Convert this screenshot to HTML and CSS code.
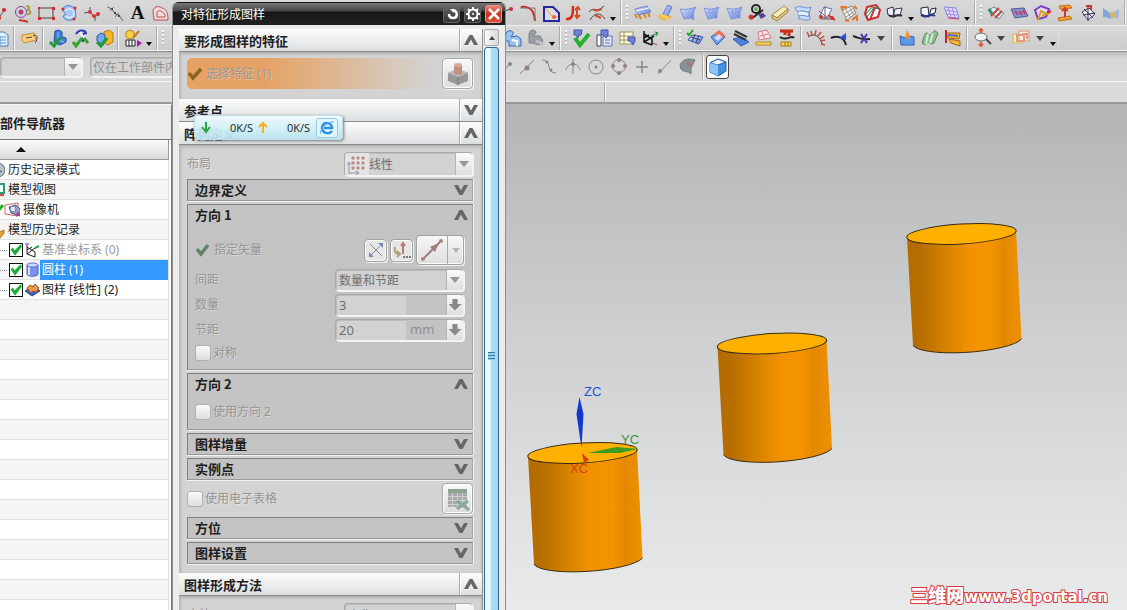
FILE: index.html
```html
<!DOCTYPE html>
<html lang="zh-CN">
<head>
<meta charset="utf-8">
<title>对特征形成图样</title>
<link rel="stylesheet" href="styles.css">
</head>
<body>
<svg class="defs" aria-hidden="true">
  <defs>
    <linearGradient id="blue" x1="0" y1="0" x2="1" y2="1"><stop offset="0" stop-color="#dfe8ff"/><stop offset="1" stop-color="#5878d8"/></linearGradient>
    <linearGradient id="side" x1="0" y1="0" x2="1" y2="0"><stop offset="0" stop-color="#b26a00"/><stop offset=".14" stop-color="#b96f00"/><stop offset=".36" stop-color="#d98400"/><stop offset=".55" stop-color="#f29200"/><stop offset=".74" stop-color="#f39300"/><stop offset=".84" stop-color="#e38800"/><stop offset="1" stop-color="#ee9000"/></linearGradient>
    <symbol id="sheet" viewBox="0 0 20 20"><path d="M3 5c5 2 10 1 15-1l-2 5v6c-4-1-6 1-9 1z" fill="url(#blue)" stroke="#7d93d8"/><path d="M4 9c4 1 8 0 12-1M8 6l1 9M12 5v10" stroke="#8ea2e6" fill="none"/></symbol>
    <symbol id="up" viewBox="0 0 14 10"><path d="M0 10 5.500 0h3L14 10h-4L7 4.500 4 10z" fill="#666"/></symbol>
    <symbol id="down" viewBox="0 0 14 10"><path d="M0 0 5.500 10h3L14 0h-4L7 5.500 4 0z" fill="#666"/></symbol>
    <symbol id="cyl" viewBox="0 0 116 132" overflow="visible"><path d="M0 14 6 122A55 12-4 0 0 114.500 116L109 7z" fill="url(#side)"/><ellipse cx="54.500" cy="11" rx="54.800" ry="9.900" transform="rotate(-3.500 54.500 11)" fill="#ffb000" stroke="#3a2c10"/><path d="M6 122A55 12-4 0 0 114.500 116" fill="none" stroke="#3a2c10"/></symbol>
  </defs>
</svg>
<div class="app">
  <header class="toolbars">
    <div class="bar">
      <div class="part left one">
        <button class="tb"><svg class="ic"><path d="M3 15h6l5-8" stroke="#555"/><circle cx="14" cy="7" r="2" fill="#d22"/><circle cx="9" cy="15" r="2" fill="#d22"/></svg></button>
        <button class="tb"><svg class="ic"><circle cx="8" cy="9" r="5.500" stroke="#8a3fa8"/><circle cx="8" cy="9" r="2" fill="#d44" stroke="#85309a"/><path d="M13 3c4 0 4 3 1 4 5 0 4 5 0 4" stroke="#a8a040" stroke-width="2"/><path d="M6 17l6 1 3 1" stroke="#c33" stroke-width="2"/></svg></button>
        <button class="tb"><svg class="ic"><path d="M3 5h14v10H3z" stroke="#444"/><path d="M2 14h3v3H2zM16 4h3v3h-3zM16 14h3v3h-3zM2 4h2v2H2z" fill="#d22"/></svg></button>
        <button class="tb"><svg class="ic"><path d="M3 7c4-7 9-4 13-2l1 9c-3 5-12 4-13-1l3-2z" fill="#a9c9f5" stroke="#4b7fd0"/><path d="M6 8c4-4 8-2 9 2s-5 6-8 3" stroke="#fff"/><circle cx="4" cy="6" r="1.500" fill="#d22"/><circle cx="16" cy="5" r="1.500" fill="#d22"/><circle cx="15" cy="16" r="1.500" fill="#d22"/></svg></button>
        <button class="tb"><svg class="ic"><path d="M2 10l6-1 4 5 6-3M8 4v5M13 14v4" stroke="#555"/><circle cx="8" cy="9" r="2" fill="#d33"/><circle cx="12" cy="13" r="2" fill="#d33"/><circle cx="16" cy="11" r="2" fill="#d33"/></svg></button>
        <button class="tb"><svg class="ic"><path d="M2 4l5 2 3 5 4 1 4 6M5 8l4-4M10 14l4-4" stroke="#666"/><path d="M6 5h2v2H6zM9 9h2v2H9zM13 12h2v2h-2z" fill="#444"/></svg></button>
        <button class="tb letter">A</button>
        <button class="tb"><svg class="ic"><path d="M2 9c0-5 5-7 9-4 4 1 6 4 6 12H3z" fill="#f4d9d9" stroke="#b0555c"/><path d="M6 10c0-3 3-3 5-1 3 1 3 3 3 5H6z" stroke="#b0555c"/></svg></button>
      </div>
      <div class="part right one">
        <button class="tb"><svg class="ic"><path d="M5 16c2-7 7-10 13-10" stroke="#333"/><circle cx="16" cy="6" r="2" fill="#c33"/></svg></button>
        <button class="tb"><svg class="ic"><path d="M3 4c8-1 13 2 14 14" stroke="#e02020" stroke-width="2"/><path d="M2 5h15v13" stroke="#777"/></svg></button>
        <button class="tb"><svg class="ic"><path d="M3 4h9l6 6v8H3z" stroke="#25259c" stroke-width="2" fill="#ddd"/><path d="M4 5l8 9h5" stroke="#e89b30"/><circle cx="13" cy="14" r="2" fill="#e07040"/></svg></button>
        <button class="tb"><svg class="ic"><path d="M2 16c7 1 7-6 7-13" stroke="#cc3018" stroke-width="2.500"/><path d="M13 14V5M11 7l3-3 2 3M11 12l2 3 3-3" stroke="#d84824" stroke-width="2"/></svg></button>
        <button class="tb"><svg class="ic"><path d="M2 9c4-6 7 2 15-6M3 17c5-8 10-8 15-1" stroke="#444"/><path d="M6 6c4 4 7 0 9 0M8 12l6 3" stroke="#d24a30" stroke-width="2"/></svg></button>
        <i class="caret"></i><i class="sep"></i><i class="grip"></i>
        <button class="tb"><svg class="ic"><path d="M3 6l12-3 4 6-13 3z" fill="url(#blue)" stroke="#6d88cf"/><path d="M3 11l2 4M7 12l2 4M12 11l2 4M16 10l2 4" stroke="#d9822b" stroke-width="2"/><path d="M4 8l13-3" stroke="#fff"/></svg></button>
        <button class="tb"><svg class="ic"><path d="M2 13l8-3 8 4-9 4z" fill="#f0b640"/><path d="M13 2l4 2-5 10-4-3z" fill="url(#blue)" stroke="#5b77c6"/><path d="M6 12l7 3" stroke="#f5d060" stroke-width="3"/></svg></button>
        <button class="tb"><svg class="ic"><path d="M2 6c6 1 11 0 16-2-3 5-3 8-2 13-3-3-7-1-10-1z" fill="url(#blue)" stroke="#7d93d8"/></svg></button>
        <button class="tb"><svg class="ic"><use href="#sheet"/></svg></button>
        <button class="tb"><svg class="ic"><use href="#sheet"/></svg></button>
        <button class="tb"><svg class="ic"><path d="M4 16L16 7" stroke="#222" stroke-width="2"/><circle cx="9" cy="6" r="4" stroke="#222" stroke-width="2" fill="#e8e8e0"/><circle cx="9" cy="6" r="2" fill="#6a6"/><circle cx="4" cy="14" r="2.500" fill="#c33"/><path d="M11 11l5-1 3 3-5 3z" fill="#54429a"/></svg></button>
        <button class="tb"><svg class="ic"><path d="M2 12L14 3l4 3-11 9z" fill="#f8edb0" stroke="#9c8a50"/><path d="M2 12v3l5 3 11-9V6L7 15z" fill="#e5d37c" stroke="#9c7a50"/></svg></button>
        <button class="tb"><svg class="ic"><path d="M2 5c5-4 10 2 16-1l-2 6 1 6c-4 3-8-1-11 0L5 9z" fill="#c8dcfb" stroke="#6b8fd6"/><path d="M5 9c4-3 8 1 11 0v4c-4 1-6-2-10 0" stroke="#5b7fc8" fill="#eaf2ff"/></svg></button>
        <button class="tb"><svg class="ic"><path d="M4 13l4-9 8 2-5 9z" fill="#fff" stroke="#5a6fc0"/><path d="M3 8l10 8M9 3v13M5 16h9" stroke="#667"/><circle cx="16" cy="15" r="2" fill="#c33"/><circle cx="5" cy="14" r="2" fill="#c33"/><path d="M12 12l7 5" stroke="#c33" stroke-width="2"/></svg></button>
        <button class="tb"><svg class="ic"><path d="M3 7l10-4 4 7-9 7z" fill="#f4f1ea" stroke="#888"/><path d="M6 5l6 10M10 4l5 8M5 11l10-6M7 14l9-6" stroke="#999"/><path d="M2 4h6M2 3l2 5M13 17l5-4v5M6 17l4 1M15 3l3 3" stroke="#e2742c" stroke-width="2"/></svg></button>
        <button class="tb"><svg class="ic"><path d="M5 4l9-2 4 5-2 7-10 3-3-6z" fill="#e8f4ff" stroke="#cc2b2b" stroke-width="2"/><path d="M4 11l5-6 7-1M5 14l6-8 6-1" stroke="#287f4a"/><path d="M8 17l5-13" stroke="#d03030" stroke-width="2"/></svg></button>
        <button class="tb"><svg class="ic"><path d="M2 6l6-2 1 8 6 1 2-8-7 1-2 7-5-1z" fill="#eef" stroke="#334"/><path d="M4 12c5 5 8-3 13 1" stroke="#334" stroke-width="2"/></svg></button>
        <i class="caret"></i>
        <button class="tb"><svg class="ic"><path d="M3 5l7-1 1 8 6-2 1-5-5 1-2 8-8-3z" fill="#f4f4ff" stroke="#223"/><path d="M3 12c6 5 8-3 14 1" stroke="#238" stroke-width="2"/></svg></button>
        <button class="tb"><svg class="ic"><path d="M3 4l12 1 3 10-11-1z" fill="#eadcff" stroke="#7c8ae0"/><path d="M4 7l12 2M5 11l12 1M7 4l3 10M11 4l3 11" stroke="#9b8ae8"/><path d="M7 15l11 1" stroke="#c36"/></svg></button>
        <i class="caret"></i><i class="sep"></i><i class="grip"></i>
        <button class="tb"><svg class="ic"><path d="M2 7l6-3 10 6-5 6z" fill="#d7e9f6" stroke="#6890a8"/><path d="M5 13l8-8M9 15l7-7" stroke="#cc4434" stroke-width="2"/><path d="M3 6l3 5" stroke="#3c8c6c" stroke-width="3"/></svg></button>
        <button class="tb"><svg class="ic"><path d="M2 6l13-1 4 8-13 2z" fill="#8494d0" stroke="#4a5a9c"/><path d="M6 8l3 4M10 8l3 4M14 7l2 4" stroke="#cc3460" stroke-width="2"/></svg></button>
        <button class="tb"><svg class="ic"><path d="M3 7l6-4 8 3-3 8-8 2z" fill="#e9d9ff" stroke="#7a3cc0" stroke-width="2"/><path d="M6 17l3-9 6 3-5 2" stroke="#d8a020" stroke-width="2"/><path d="M16 10l3-2" stroke="#d22" stroke-width="2"/></svg></button>
        <button class="tb"><svg class="ic"><path d="M4 3l11-1 2 3-12 1zM3 15l12-2 2 3-13 2z" fill="#f0a030" stroke="#c66c20"/><path d="M10 5v9M7 8l3-3 3 3" stroke="#d03828" stroke-width="2"/></svg></button>
        <button class="tb"><svg class="ic"><path d="M4 9l7-4 6 6-7 6z" fill="#eef" stroke="#446"/><path d="M10 2v16M6 6l9 9M5 12l12-2" stroke="#334"/><path d="M8 3h5v4" stroke="#c33" stroke-width="2"/></svg></button>
        <button class="tb"><svg class="ic"><path d="M2 5l7 5v6c-3-2-5-2-7-2z" fill="#7fa6e0"/><path d="M9 10c4 0 6-3 9-4v9c-4-1-6 1-9 1z" fill="#a7b6cc"/><path d="M9 10l5 4" stroke="#e8b050" stroke-width="3"/></svg></button>
        <i class="sep"></i>
      </div>
    </div>
    <div class="bar">
      <div class="part left two">
        <button class="tb"><svg class="ic"><path d="M4 4h10l4 3v11H4z" fill="#dff0ff" stroke="#4a7fc0"/><path d="M6 9h10M6 12h10M6 15h10M10 8v10" stroke="#5a94d0"/></svg></button>
        <i class="sep"></i>
        <button class="tb"><svg class="ic"><path d="M3 7l12-2 2 7-12 3-2-3z" fill="#f8cf80" stroke="#c78a30"/><path d="M7 10l6-1M14 8c5-3 5 4 2 7" stroke="#5b4020"/></svg></button>
        <i class="sep"></i>
        <button class="tb"><svg class="ic"><path d="M7 3l4-1 3 2v5l4 1v4l-6 3-6-3z" fill="#3f7fdc" stroke="#1d4c9c"/><path d="M10 4v8l6 2" stroke="#9cc4ff"/><path d="M2 14l4 4 6-8" stroke="#1b9a3a" stroke-width="3"/></svg></button>
        <button class="tb"><svg class="ic"><path d="M5 6c3-5 9-4 10-1l-3 1v8" stroke="#2b3fb0" stroke-width="2"/><path d="M9 4l5 7" stroke="#fff" stroke-width="2"/><path d="M2 14l3 4 6-8M13 10l4 5" stroke="#35a52c" stroke-width="3"/></svg></button>
        <button class="tb"><svg class="ic"><path d="M10 4l5-2 4 3v9l-5 3-4-2z" fill="#f7b52c" stroke="#b77810"/><path d="M3 8l4-3 4 2v6l-4 3-4-3z" fill="#6fa8ee" stroke="#2457a8"/><path d="M3 14l4 4 6-8" stroke="#1b9a3a" stroke-width="3"/></svg></button>
        <i class="sep"></i>
        <button class="tb"><svg class="ic"><path d="M3 4l4-2 4 2v5l-4 2-4-2z" fill="#f7cf40" stroke="#b58a10"/><path d="M3 12h9v6H3zM6 12v6M9 12v6" stroke="#222" fill="#fff"/><path d="M10 10l6-7" stroke="#c8781c" stroke-width="2"/><path d="M14 12l5 3-5 4z" fill="#a51ab0"/></svg></button>
        <i class="caret"></i><i class="sep"></i><i class="grip"></i>
        <button class="tb"><svg class="ic"><path d="M5 4h10v12H5z" fill="#dfe9ff" stroke="#3d6fd0"/></svg></button>
      </div>
      <div class="part right two">
        <button class="tb"><svg class="ic"><path d="M3 5c3-4 8-2 7 1l-2 3 6-1 4 3v7H6v-5H2z" fill="#9cc3f0" stroke="#3568b0"/><path d="M9 12l5 1v5" stroke="#fff" stroke-width="2"/></svg></button>
        <button class="tb"><svg class="ic"><path d="M3 6c1-6 8-4 7-1l-3 3 7 0 3 5-4 4-6-2-4 0z" fill="#9a9da4" stroke="#7d8088"/><path d="M10 13l7 3" stroke="#b9bcc2" stroke-width="3"/></svg></button>
        <i class="caret"></i><i class="sep"></i><i class="grip"></i>
        <button class="tb"><svg class="ic"><path d="M3 2h8l-1 5H8l-1 3-2-3H3z" fill="#7280dc" stroke="#4452a8"/><path d="M4 10l5 7 9-11" stroke="#22b02e" stroke-width="4"/></svg></button>
        <button class="tb"><svg class="ic"><path d="M3 7h4v11H3z" fill="#fff" stroke="#445"/><path d="M9 8h9v10H9z" fill="#dfe8fa" stroke="#5c74bc"/><path d="M7 2h7v5l-2 3-3-3H7z" fill="#7280dc" stroke="#4452a8"/><path d="M11 12h5M11 15h5" stroke="#5c74bc"/></svg></button>
        <button class="tb"><svg class="ic"><path d="M3 4h13v12H3z" fill="#fffbe0" stroke="#99965c"/><path d="M3 8h13M3 12h13M7 4v12" stroke="#99965c"/><path d="M11 9h7v4l-2 4-3-4h-2z" fill="#7280dc" stroke="#4452a8"/></svg></button>
        <button class="tb"><svg class="ic"><path d="M4 3v11l8 3M4 14l10-6M4 6l8 5v6M4 10l5-3" stroke="#111" stroke-width="1.500"/><path d="M11 8l7-3M15 4l3 1-2 3" stroke="#178a38"/><path d="M13 15l4 2" stroke="#b33"/></svg></button>
        <i class="caret"></i><i class="sep"></i><i class="grip"></i>
        <button class="tb"><svg class="ic"><path d="M3 12l4-5 11 2-4 7z" fill="url(#blue)" stroke="#3458b8"/><path d="M6 9l9 3M10 6l-3 8M14 7l-3 8" stroke="#345"/><path d="M2 5l2 2 4-5" stroke="#1ca52e" stroke-width="2"/></svg></button>
        <button class="tb"><svg class="ic"><path d="M3 9l8-6 6 6-8 8z" fill="#6f9bea" stroke="#3863c0"/><path d="M6 6l5-4 6 5-4 4z" fill="#f0745c"/><path d="M6 10l5-4 3 3-4 4z" fill="#cfe0ff"/></svg></button>
        <button class="tb"><svg class="ic"><path d="M2 11l8-2 8 5-8 4z" fill="#4f80de" stroke="#315fb8"/><path d="M4 3l12 6M3 6l12 6" stroke="#333" stroke-width="2"/></svg></button>
        <button class="tb"><svg class="ic"><path d="M4 4l9-2 4 8-12 2z" fill="#fbe3e7" stroke="#d07886"/><path d="M6 8l8-2M8 4l3 7" stroke="#d07886"/><path d="M2 14h15v3H2z" fill="#f7d264" stroke="#b48a20"/></svg></button>
        <button class="tb"><svg class="ic"><path d="M3 3h13M8 3v4M12 3v5" stroke="#c4301c" stroke-width="3"/><path d="M3 9c6 5 12-3 14 1" stroke="#222" stroke-width="2"/><path d="M4 14h10v4H4zM8 14v4M11 14v4" fill="#f7d264" stroke="#aa7c10"/></svg></button>
        <i class="sep"></i>
        <button class="tb"><svg class="ic"><path d="M2 9c7-5 12 0 14 7" stroke="#444"/><path d="M3 8L1 4M6 7L5 3M9 7l1-5M12 8l3-4M14 11l4-3M15 13l4-1M15 16l4 1" stroke="#cf4a3e" stroke-width="1.500"/></svg></button>
        <button class="tb"><svg class="ic"><path d="M2 10c6-3 13-1 15 7" stroke="#222" stroke-width="2"/><path d="M10 10l7-5v7z" fill="#2a4be0"/></svg></button>
        <button class="tb"><svg class="ic"><path d="M1 8c7 2 8 4 17 3" stroke="#222" stroke-width="2"/><path d="M9 6l6 9M15 6l-6 9" stroke="#3d39b0" stroke-width="2"/></svg></button>
        <i class="caret wide"></i><i class="sep"></i>
        <button class="tb"><svg class="ic"><path d="M3 8l5 2 3-2 6 1v8H4z" fill="#5e98e8" stroke="#2e62b4"/><path d="M8 10l2-8 3 6v3" fill="#f0902c"/></svg></button>
        <button class="tb"><svg class="ic"><path d="M2 15c3-12 5-11 6-9s3 1 5-2 3 0 5 1l-4 10c-4 3-5-3-7 0s-3 1-5 0z" fill="#90b990" stroke="#568a58"/><path d="M8 6l-2 10M13 5l-3 10" stroke="#d4ecd4" stroke-width="2"/></svg></button>
        <button class="tb"><svg class="ic"><path d="M3 5h14l-1 6-11-1zM6 11l11 2v5L8 15z" fill="#f5b740" stroke="#9c6418"/><path d="M5 7l10 1" stroke="#4a70cc" stroke-width="2"/><path d="M3 2v13" stroke="#c22" stroke-width="2"/></svg></button>
        <i class="sep"></i>
        <button class="tb"><svg class="ic"><ellipse cx="9" cy="9" rx="6" ry="4" fill="#eef0f4" stroke="#666"/><path d="M14 11l5 5" stroke="#444" stroke-width="2"/><path d="M9 1v4M7 3l2-2 2 2M9 18v-4M7 16l2 2 2-2" stroke="#e0602c" stroke-width="2"/></svg></button>
        <i class="caret wide"></i>
        <button class="tb"><svg class="ic"><path d="M2 6h9v9H2z" fill="#fbf0a8" stroke="#c8b75c"/><path d="M8 3h10v10H8z" fill="#fceadf" stroke="#d89c80"/><path d="M6 7h7v6H6zM11 6h5v5" stroke="#e39a82" stroke-width="2"/></svg></button>
        <i class="caret wide"></i><i class="caret"></i><i class="edge"></i>
      </div>
    </div>
    <div class="bar selection">
      <div class="part left">
        <div class="combo scope"><select disabled aria-label="类型过滤器"><option></option></select><i class="arrow"></i></div>
        <div class="combo within"><select disabled aria-label="选择范围"><option>仅在工作部件内部</option></select></div>
      </div>
      <div class="part right snap">
        <button class="tb"><svg class="ic gray"><path d="M3 17L16 7"/><circle cx="15" cy="7" r="2"/></svg></button>
        <button class="tb"><svg class="ic gray"><path d="M2 17L16 3"/><circle cx="9" cy="11" r="2.500"/></svg></button>
        <button class="tb"><svg class="ic gray"><path d="M1 3c11 0 3 13 14 13"/><circle cx="6" cy="5" r="1.500"/><circle cx="10" cy="13" r="1.500"/></svg></button>
        <button class="tb"><svg class="ic gray"><path d="M9 2v15M2 13c2-8 12-8 14 0"/><circle cx="9" cy="7" r="2"/></svg></button>
        <button class="tb"><svg class="ic gray"><circle class="o" cx="9" cy="10" r="7"/><circle cx="9" cy="10" r="1.500"/></svg></button>
        <button class="tb"><svg class="ic gray"><circle class="o" cx="9" cy="9" r="6.500"/><circle cx="9" cy="3" r="2"/><circle cx="3" cy="9" r="2"/><circle cx="15" cy="9" r="2"/><circle cx="9" cy="16" r="2"/></svg></button>
        <button class="tb"><svg class="ic gray"><path d="M9 4v12M3 10h12" stroke-width="1.500"/></svg></button>
        <button class="tb"><svg class="ic gray"><path d="M2 17L15 3"/><circle cx="4" cy="14" r="2"/></svg></button>
        <button class="tb"><svg class="ic"><path d="M1 8c3-6 8-7 15-5l-4 8v6c-4-4-7-1-10-5z" fill="#8c9198" stroke="#75797f"/><circle cx="10" cy="7" r="2" fill="#a87870"/></svg></button>
        <i class="sep"></i>
        <button class="tb on"><svg class="ic"><path d="M2 6l8-4 8 3v9l-8 5-8-4z" fill="#4390e0" stroke="#1c5caa"/><path d="M2 6l8 2 8-3-8-3z" fill="#e7f4ff" stroke="#1c5caa"/><path d="M2 6v9l8 4V8z" fill="#8cc4f8"/></svg></button>
      </div>
    </div>
    <div class="bar prompt"><div class="cue"></div><div class="status"></div></div>
  </header>

  <main class="main">
    <aside class="nav">
      <h2 class="navtitle">部件导航器</h2>
      <div class="navhead"><i class="sort"></i></div>
      <ul class="tree">
        <li><svg class="ti l"><circle cx="9" cy="9" r="7" fill="#b8c0cc" stroke="#5c6674"/><path d="M9 5v4l4 2" stroke="#445"/></svg>历史记录模式</li>
        <li><svg class="ti l"><path d="M7 3h8v9H7z" fill="#eff" stroke="#2b9a7c" stroke-width="2"/><path d="M8 14h7" stroke="#d44" stroke-width="2"/></svg>模型视图</li>
        <li class="cam"><svg class="ti tick"><path d="M5 9l3 3 7-8" stroke="#22b02e" stroke-width="3"/></svg><svg class="ti"><path d="M1 4l13-2v13l-13-2z" fill="#fff" stroke="#c66"/><path d="M5 6l7-2 4 4v7l-9-3z" fill="#9aa6d0" stroke="#556"/><circle cx="9" cy="8" r="3" fill="#dde8ff" stroke="#6572a8"/><path d="M13 10l3 3-4 3z" fill="#c02cb8"/></svg>摄像机</li>
        <li><svg class="ti l"><path d="M2 9l7 3 6-3v3l-4 5-7-3z" fill="#e8a53a" stroke="#a66a10"/></svg>模型历史记录</li>
        <li class="kid off"><i class="dots"></i><label><input type="checkbox" checked><svg class="ti"><path d="M3 4v9l8 3M3 13l8-6M3 6l8 5v5M3 9l5-3" stroke="#222"/><path d="M11 7l4-2" stroke="#2a4" stroke-width="2"/><path d="M1 3h4" stroke="#33c"/></svg><span>基准坐标系 (0)</span></label></li>
        <li class="kid sel"><i class="dots"></i><label><input type="checkbox" checked><svg class="ti"><path d="M3 4v9c0 3 11 3 11 0V4z" fill="#7b93ee" stroke="#4a5ec4"/><path d="M5 5v9" stroke="#d8e0ff" stroke-width="2"/><ellipse cx="8.500" cy="4" rx="5.500" ry="2" fill="#ccd6ff" stroke="#5a6ed0"/></svg><span>圆柱 (1)</span></label></li>
        <li class="kid"><i class="dots"></i><label><input type="checkbox" checked><svg class="ti"><path d="M1 10l8-5 7 5-8 5z" fill="#3d62c0" stroke="#2a468c"/><path d="M3 7l3-3 3 2 2-3 4 4-3 4-3-1-2 2z" fill="#f0964a" stroke="#a8581c"/></svg><span>图样 [线性] (2)</span></label></li>
      </ul>
    </aside>
    <section class="view">
      <svg class="scene">
        <g transform="translate(-172 -104)">
          <use href="#cyl" x="528" y="442" width="116" height="132"/>
          <use href="#cyl" x="717.500" y="332.500" width="116" height="132"/>
          <use href="#cyl" x="907" y="223" width="116" height="132"/>
          <path d="M579.500 397l-3 17 5 34 2-34z" fill="#1238d0"/>
          <path d="M587 453l30-6 21 2-18 4z" fill="#3f9c1c"/>
          <path d="M582 453l7 7-5 3z" fill="#d43a14"/>
          <text x="584" y="396" fill="#2350d8">ZC</text>
          <text x="621" y="444" fill="#35983c">YC</text>
          <text x="570" y="473" fill="#d8431c">XC</text>
        </g>
      </svg>
      <div class="mark"><b>三维网</b>www.3dportal.cn</div>
    </section>
  </main>

  <section class="dialog">
    <header class="titlebar"><h1>对特征形成图样</h1>
      <button aria-label="重置"><svg class="ti"><path d="M9 4c5 1 5 8 0 8-3 0-4-2-4-4" stroke="#fff" stroke-width="2.500"/><path d="M6 3h4v4z" fill="#fff"/></svg></button>
      <button aria-label="选项"><svg class="ti"><circle cx="8" cy="8" r="4.500" stroke="#fff" stroke-width="2"/><path d="M8 1v3M8 12v3M1 8h3M12 8h3M3 3l2 2M11 11l2 2M13 3l-2 2M5 11l-2 2" stroke="#fff" stroke-width="2"/><circle cx="8" cy="8" r="1" fill="#fff"/></svg></button>
      <button class="close" aria-label="关闭"><svg class="ti"><path d="M3 3l10 10M13 3L3 13" stroke="#fff" stroke-width="2.500"/></svg></button>
    </header>
    <div class="dlgbody">
      <div class="content">
        <h3 class="group">要形成图样的特征<button aria-label="折叠"><svg class="chev"><use href="#up"/></svg></button></h3>
        <div class="panel pick">
          <div class="choose"><svg class="ti"><path d="M2 8l4 5 8-9" stroke="#8a6420" stroke-width="3.500"/></svg>选择特征 (1)</div>
          <button class="big" disabled aria-label="特征"><svg class="ic24"><path d="M2 11l10-4 10 4v8l-10 4-10-4z" fill="#989898"/><path d="M2 11l10 4 10-4-10-4z" fill="#b8b8b8"/><path d="M12 15v8" stroke="#777"/><path d="M8 3v8c0 2 8 2 8 0V3z" fill="#c5917f"/><ellipse cx="12" cy="3" rx="4" ry="2" fill="#d4ab9c"/></svg></button>
        </div>
        <h3 class="group">参考点<button aria-label="展开"><svg class="chev"><use href="#down"/></svg></button></h3>
        <h3 class="group">阵列定义<button aria-label="折叠"><svg class="chev"><use href="#up"/></svg></button></h3>
        <div class="panel define">
          <div class="line layout"><label for="layout">布局</label>
            <div class="combo"><svg class="ic24 pat"><path d="M4 21V10M2 12l2-3 2 3M4 20h9M11 18l3 2-3 2" stroke="#8993a8"/><g fill="#bd8c8c"><circle cx="8" cy="5" r="1.700"/><circle cx="13" cy="5" r="1.700"/><circle cx="18" cy="5" r="1.700"/><circle cx="8" cy="10" r="1.700"/><circle cx="13" cy="10" r="1.700"/><circle cx="18" cy="10" r="1.700"/><circle cx="8" cy="15" r="1.700"/><circle cx="13" cy="15" r="1.700"/><circle cx="18" cy="15" r="1.700"/></g></svg><select id="layout" disabled><option>线性</option></select><i class="arrow"></i></div></div>
          <div class="box"><h4>边界定义<svg class="chev"><use href="#down"/></svg></h4></div>
          <div class="box dir1"><h4>方向 1<svg class="chev"><use href="#up"/></svg></h4>
            <div class="vector"><svg class="ti"><path d="M2 8l4 5 7-9" stroke="#5f8566" stroke-width="3.500"/></svg><span>指定矢量</span>
              <button class="small" disabled aria-label="反向"><svg class="ic"><path d="M4 4l12 12M5 15L15 5" stroke="#8a8f9c"/><path d="M3 17v-5l5 5zM17 3v5l-5-5z" fill="#7f8ab5"/></svg></button>
              <button class="small" disabled aria-label="矢量对话框"><svg class="ic"><path d="M11 14V4M9 6l2-3 2 3" stroke="#b27f78" stroke-width="2"/><path d="M3 7c-1 5 1 7 4 7M5 11l3 3-3 3" stroke="#b59b78" stroke-width="2"/><path d="M11 17h2M14 17h2M17 17h2" stroke="#777" stroke-width="2"/></svg></button>
              <span class="split"><button disabled aria-label="两点"><svg class="ic24"><path d="M3 21L20 4" stroke="#9c7d78" stroke-width="2"/><circle cx="3" cy="21" r="2" fill="#a98680"/><circle cx="21" cy="3" r="2" fill="#a98680"/><path d="M10 9l9-4-4 9z" fill="#9c7d78"/></svg></button><button class="drop" disabled aria-label="更多"><i class="tri"></i></button></span>
            </div>
            <div class="line"><label for="spacing">间距</label><div class="combo"><select id="spacing" disabled><option>数量和节距</option></select><i class="arrow"></i></div></div>
            <div class="line"><label for="count">数量</label><div class="combo num"><input id="count" value="3" disabled><span class="unit"></span><i class="arrow fat"></i></div></div>
            <div class="line"><label for="pitch">节距</label><div class="combo num"><input id="pitch" value="20" disabled><span class="unit">mm</span><i class="arrow fat"></i></div></div>
            <label class="opt"><input type="checkbox" disabled>对称</label>
          </div>
          <div class="box dir2"><h4>方向 2<svg class="chev"><use href="#up"/></svg></h4>
            <label class="opt"><input type="checkbox" disabled>使用方向 2</label></div>
          <div class="box"><h4>图样增量<svg class="chev"><use href="#down"/></svg></h4></div>
          <div class="box"><h4>实例点<svg class="chev"><use href="#down"/></svg></h4></div>
          <div class="sheetrow"><label class="opt"><input type="checkbox" disabled>使用电子表格</label>
            <button class="big" disabled aria-label="电子表格"><svg class="ic24"><path d="M2 2h19v18H2z" fill="#a9a9ad"/><path d="M2 2h19v4H2z" fill="#8fa48f"/><path d="M2 9.500h19M2 13.500h19M2 17.500h19M6.500 6v14M11.500 6v14M16.500 6v14" stroke="#d0d0d0"/><path d="M11 14l12 9M22 14l-11 8" stroke="#8fa795" stroke-width="3"/></svg></button></div>
          <div class="box"><h4>方位<svg class="chev"><use href="#down"/></svg></h4></div>
          <div class="box"><h4>图样设置<svg class="chev"><use href="#down"/></svg></h4></div>
        </div>
        <h3 class="group">图样形成方法<button aria-label="折叠"><svg class="chev"><use href="#up"/></svg></button></h3>
        <div class="panel last"><div class="line layout"><label for="method">方法</label><div class="combo"><select id="method" disabled><option>变化</option></select><i class="arrow"></i></div></div></div>
      </div>
      <div class="scroll"><button aria-label="向上滚动"><i class="uptri"></i></button><div class="thumb"><i class="ridges"></i></div></div>
    </div>
  </section>

  <div class="net">
    <svg class="arw"><path d="M5 1v9M1 6l4 5 4-5" stroke="#25a53a" stroke-width="2"/></svg><span>0K/S</span>
    <svg class="arw"><path d="M5 12V2M1 6l4-4 4 4" stroke="#f2b21c" stroke-width="2"/></svg><span>0K/S</span>
    <button aria-label="浏览器"><svg class="ti"><path d="M13 12c-3 4-10 2-10-3 0-7 10-6 10 0H5" stroke="#2f8fe0" stroke-width="2.500"/><path d="M2 15C-1 12 9 1 15 3" stroke="#5ab0f0"/></svg></button>
  </div>
</div>
</body>
</html>
```

FILE: styles.css
```css
* { box-sizing: border-box; }
body { margin: 0; font: 12px/16px "Noto Sans", "Noto Sans CJK SC", sans-serif; color: #1e1e1e; }
button { padding: 0; border: 0; background: none; font: inherit; }
h1, h2, h3, h4, ul { margin: 0; padding: 0; }
svg { fill: none; flex: none; }
.defs { position: absolute; width: 0; height: 0; }
.app { position: relative; display: flex; flex-direction: column; height: 100vh; overflow: hidden; background: #d6d6d6; }

/* toolbars */
.toolbars { flex: none; overflow: hidden; }
.bar { display: flex; height: 26px; background: linear-gradient(#d9d9d9, #cdcdcd); border-bottom: 1px solid #f2f2f2; }
.bar + .bar { height: 25px; }
.part { display: flex; align-items: center; flex: none; }
.left { width: 493px; }
.left > * { flex: none; }
.left.one, .left.two { margin-left: -12px; width: 505px; }
.right.two { padding-left: 8px; }
.tb { display: flex; align-items: center; justify-content: center; width: 23px; height: 24px; flex: none; }
.ic { width: 20px; height: 20px; }
.ic24 { width: 24px; height: 24px; }
.ti { width: 16px; height: 18px; }
.letter { font: bold 19px/24px "Liberation Serif", serif; color: #111; }
.caret { display: flex; align-items: flex-end; justify-content: center; width: 10px; height: 16px; }
.caret::before { content: ""; border: 3px solid transparent; border-top: 4px solid #111; border-bottom: 0; }
.caret.wide { width: 16px; align-items: center; }
.caret.wide::before { border-width: 5px 4px 0; border-top-color: #444; }
.sep { width: 6px; height: 24px; background: linear-gradient(90deg, transparent 2px, #aaa 2px 3px, #f8f8f8 3px 4px, transparent 4px); }
.grip { width: 6px; height: 16px; background: repeating-linear-gradient(#f6f6f6 0 2px, #b2b2b2 2px 3px, transparent 3px 4px) center / 2px 100% no-repeat; }
.edge { width: 1px; height: 24px; background: #ddd; }
.bar.selection { height: 31px; background: linear-gradient(#bcbcbc, #d6d6d6 6px, #dadada); border-top: 1px solid #8b8b8b; border-bottom-color: #f6f6f6; }
.gray path, .gray .o { stroke: #8a8583; fill: none; }
.gray circle { fill: #95807c; }
.gray .o { fill: none; }
.on { border: 1px solid #444; border-radius: 3px; background: #fff; }
.prompt { background: #dadada; border-bottom: 2px solid #999; }
.bar.prompt { height: 22px; }
.cue { flex: none; width: 606px; border-right: 1px solid #f6f6f6; box-shadow: inset -1px 0 #aaa; }
.status { flex: 1; }

/* fields */
.combo { display: flex; align-items: stretch; height: 22px; border: 1px solid #a9a9a9; border-right-color: #f2f2f2; border-bottom-color: #f2f2f2; border-radius: 4px; background: #d2d2d2; box-shadow: 1px 1px #f4f4f4, inset 1px 1px #bcbcbc; overflow: hidden; }
.combo select, .combo input { appearance: none; flex: 1; min-width: 0; width: 0; border: 0; padding: 0 3px; background: none; color: #6e6e6e; font: 12px/18px "Noto Sans CJK SC", sans-serif; opacity: 1; }
.combo input { font: 13px/18px "Noto Sans", sans-serif; }
.arrow { flex: none; display: flex; align-items: center; justify-content: center; width: 17px; background: linear-gradient(#fafafa, #dedede); border-left: 1px solid #b4b4b4; border-radius: 0 3px 3px 0; }
.arrow::before, .tri { content: ""; border: 5px solid transparent; border-top: 6px solid #979797; border-bottom: 0; }
.arrow.fat::before { width: 13px; height: 12px; border: 0; background: #8a8a8a; clip-path: polygon(30% 0, 70% 0, 70% 45%, 100% 45%, 50% 100%, 0 45%, 30% 45%); }
.scope { width: 82px; height: 20px; margin-right: 8px; }
.within { width: 140px; height: 20px; }
.within select { padding: 0 2px; color: #909090; }

/* part navigator */
.main { flex: 1; display: flex; min-height: 0; }
.nav { flex: none; display: flex; flex-direction: column; width: 172px; background: #fff; border-right: 1px solid #777; border-top: 1px solid #f8f8f8; }
.navtitle { height: 35px; background: #ebebeb; border-bottom: 1px solid #777; font: bold 13px/36px "Noto Sans CJK SC", sans-serif; }
.navhead { display: flex; align-items: center; height: 20px; padding-left: 16px; margin-right: 2px; background: linear-gradient(#fbfbfb, #dcdcdc); border-bottom: 1px solid #999; border-right: 1px solid #999; }
.sort { border: 5px solid transparent; border-bottom: 5px solid #111; border-top: 0; }
.tree { flex: 1; list-style: none; margin-right: 2px; border-right: 1px solid #ddd; background: repeating-linear-gradient(#fff 0 19px, #e2e2e2 19px 20px, #f4f4f4 20px 39px, #e2e2e2 39px 40px); }
.tree li { display: flex; align-items: center; height: 20px; white-space: nowrap; }
.tree .l { margin-left: -11px; margin-right: 3px; }
.cam .tick { margin-left: -12px; }
.cam .ti + .ti { margin-right: 3px; }
.dots { flex: none; width: 7px; height: 1px; background: repeating-linear-gradient(90deg, #999 0 1px, transparent 1px 2px); }
.kid label { display: flex; align-items: center; flex: 1; padding-left: 3px; }
.kid span { flex: 1; line-height: 20px; padding-left: 2px; }
.kid .ti { margin-left: 2px; }
.kid.off span { color: #999; }
.kid.sel span { background: #3399ff; color: #fff; }
.tree input { appearance: none; flex: none; width: 12px; height: 12px; margin: 0; outline: 1px solid #111; background: #fff; }
.tree input::before { content: ""; display: block; width: 12px; height: 12px; background: #18b038; clip-path: polygon(5% 45%, 22% 30%, 40% 52%, 88% 3%, 100% 20%, 42% 98%); }

/* model view */
.view { position: relative; flex: 1; min-width: 0; overflow: hidden; background: linear-gradient(#b3b4b6, #cfd0d2 47%, #e9eaec); }
.scene { display: block; width: 100%; height: 100%; font: 13px "Liberation Sans", sans-serif; }
.mark { position: absolute; right: 19px; bottom: 3px; color: #fff; font: bold 15px/20px "DejaVu Sans", "Noto Sans CJK SC", sans-serif; -webkit-text-stroke: 2px #d63a40; paint-order: stroke fill; }
.mark b { font-size: 18px; }

/* floating dialog */
.dialog { position: absolute; left: 172px; top: 2px; bottom: 0; width: 334px; display: flex; flex-direction: column; overflow: hidden; background: #ececec; border: 1px solid #8e8e8e; border-width: 0 1px; border-radius: 6px 6px 0 0; }
.titlebar { flex: none; display: flex; align-items: center; gap: 4px; height: 23px; padding: 0 3px 0 8px; background: linear-gradient(#777, #444 8px, #161616 9px, #222); border-top: 1px solid #111; }
.titlebar h1 { flex: 1; font: 12px/20px "Noto Sans CJK SC", sans-serif; color: #fff; }
.titlebar button { display: flex; align-items: center; justify-content: center; width: 17px; height: 18px; border: 1px solid #666; border-radius: 3px; background: linear-gradient(#666, #333); }
.titlebar .ti { width: 16px; height: 16px; }
.titlebar .close { border-color: #e8968a; background: linear-gradient(#e88474, #c83420 50%, #d85038); }
.dlgbody { flex: 1; display: flex; min-height: 0; padding: 4px 6px 0 6px; overflow: hidden; }
.content { flex: 1; min-width: 0; border-right: 1px solid #8f8f8f; }
.group { display: flex; height: 23px; padding-left: 5px; font: bold 13px/24px "Noto Sans CJK SC", sans-serif; background: linear-gradient(#fcfcfc, #dcdfe1); border-bottom: 1px solid #888; }
.group button { display: flex; align-items: center; justify-content: center; width: 23px; margin-left: auto; border-left: 1px solid #aaa; box-shadow: inset 1px 0 #fff; }
.chev { width: 14px; height: 10px; }
.panel { background: #d3d3d3; box-shadow: inset 2px 2px 3px #b4b4b4, inset -1px 0 2px #bdbdbd; }
.panel label, .choose, .vector { color: #959595; text-shadow: 1px 1px rgba(255, 255, 255, .35); }
.pick { display: flex; height: 47px; padding: 6px 9px 0 8px; }
.choose { flex: 1; display: flex; align-items: center; gap: 3px; height: 31px; border-radius: 5px; background: linear-gradient(90deg, #e5a264 0 30%, #d3d3d3 96%); }
.big { width: 31px; height: 31px; display: flex; align-items: center; justify-content: center; border: 1px solid #a8a8a8; border-radius: 4px; background: linear-gradient(#f8f8f8, #dcdcdc); box-shadow: inset 0 0 0 1px #fff, 1px 1px #f3f3f3; }
.define { display: flex; flex-direction: column; gap: 3px; padding: 6px 9px 9px 8px; }
.line { display: flex; align-items: center; height: 25px; }
.line label { flex: 1; }
.line .combo { width: 129px; }
.layout .combo { height: 24px; }
.pat { background: #e4e4e4; }
.pat + select { padding: 0; }
.box { height: 22px; border: 1px solid #808080; border-right-color: #aaa; border-bottom-color: #999; background: #c3c3c3; box-shadow: 0 1px #f2f2f2, 1px 0 #f2f2f2; padding: 0 8px 0 7px; }
.box h4 { display: flex; align-items: center; height: 20px; font: bold 13px/20px "Noto Sans CJK SC", sans-serif; }
.box h4 .chev { margin-left: auto; margin-right: -4px; }
.dir1 { height: 166px; }
.dir2 { height: 57px; }
.vector { display: flex; align-items: center; height: 34px; margin-top: 8px; gap: 3px; }
.vector > span:first-of-type { flex: 1; }
.small { display: flex; align-items: center; justify-content: center; width: 23px; height: 23px; border: 1px solid #a0a0a0; border-radius: 4px; background: #e6e6e6; box-shadow: inset 0 0 0 1px #fafafa, 1px 1px #f3f3f3; }
.split { display: flex; height: 30px; border: 1px solid #a0a0a0; border-radius: 4px; background: linear-gradient(#f6f6f6, #dedede); box-shadow: inset 0 0 0 1px #fafafa, 1px 1px #f3f3f3; }
.split button { width: 30px; display: flex; align-items: center; justify-content: center; }
.split .drop { width: 16px; border-left: 1px solid #aaa; }
.tri { border-width: 5px 4px 0; border-top-color: #b4b4b4; }
.unit { width: 40px; padding: 1px 4px; background: #c3c3c3; color: #8e8e8e; font-size: 13px; }
.opt { display: flex; align-items: center; gap: 2px; height: 22px; }
.opt input { appearance: none; width: 16px; height: 16px; margin: 0; border: 1px solid #b0b0b0; border-radius: 3px; background: linear-gradient(#fafafa, #dedede); }
.dir2 .opt { margin-top: 7px; }
.sheetrow { display: flex; align-items: center; justify-content: space-between; height: 31px; }
.last { padding: 6px 9px 6px 8px; height: 60px; }
.scroll { flex: none; display: flex; flex-direction: column; width: 15px; margin-left: 1px; }
.scroll button { flex: none; height: 17px; display: flex; align-items: center; justify-content: center; border: 1px solid #aaa; border-radius: 2px; background: linear-gradient(90deg, #fafafa, #d8d8d8); }
.uptri { border: 3px solid transparent; border-bottom: 4px solid #444; border-top: 0; }
.thumb { flex: 0 0 618px; display: flex; align-items: center; justify-content: center; margin-top: 1px; border: 1px solid #34658f; border-radius: 3px; background: linear-gradient(90deg, #e6f8ff 0 40%, #a9dcf6 50%, #a6d6f0); }
.ridges { width: 7px; height: 8px; background: repeating-linear-gradient(#3878a4 0 1px, #8fd0f0 1px 3px); }

/* network monitor */
.net { position: absolute; left: 194px; top: 115px; width: 149px; height: 25px; display: flex; align-items: center; padding: 0 4px 0 6px; border: 1px solid #c2dde5; border-radius: 4px; background: linear-gradient(#f0fbfe, #d2eff7f2 50%, #b8e4f0f0); box-shadow: 1px 1px 3px #777; color: #222; }
.arw { width: 10px; height: 13px; }
.net span { width: 42px; text-align: right; font: 11px/16px "Open Sans", sans-serif; }
.net .arw ~ .arw { margin-left: 5px; }
.net button { display: flex; align-items: center; justify-content: center; width: 22px; height: 20px; margin-left: auto; border: 1px solid #9ccbe0; border-radius: 3px; background: #dff4fb; }
```
